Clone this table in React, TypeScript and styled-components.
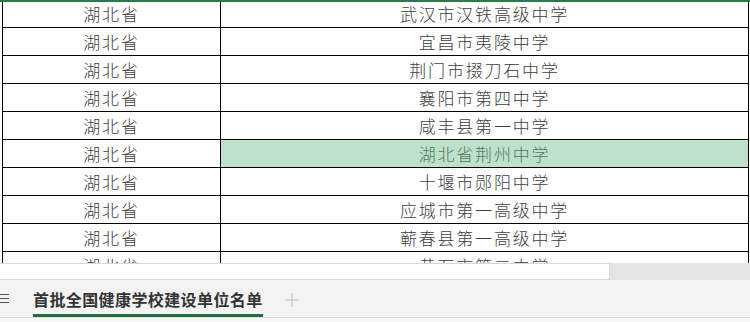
import React from 'react';
import styled, { createGlobalStyle } from 'styled-components';

const GlobalStyle = createGlobalStyle`
  html, body {
    margin: 0;
    padding: 0;
    background: #fff;
  }
  body {
    font-family: "Noto Sans CJK SC", "Noto Sans", sans-serif;
  }
`;

const StyledPage = styled.div`
  width: 750px;
  height: 322px;
  display: flex;
  flex-direction: column;
  overflow: hidden;
  background: #fff;
`;

const StyledSheet = styled.div`
  height: 261px;
  border-top: 2px solid #2a7a4c;
  overflow: hidden;
`;

const StyledRows = styled.div`
  margin-top: -2px;
`;

const StyledRow = styled.div`
  display: grid;
  grid-template-columns: 218px 529px;
  margin-left: 2px;
  height: 28px;
`;

const StyledCell = styled.div<{ $highlight?: boolean; $last?: boolean }>`
  display: flex;
  align-items: center;
  justify-content: center;
  border-left: 1px solid #000;
  border-bottom: 1px solid #000;
  border-right: ${(p) => (p.$last ? '1px solid #000' : 'none')};
  background: ${(p) => (p.$highlight ? '#bfe1cc' : '#fff')};
  color: ${(p) => (p.$highlight ? '#4f785d' : '#404040')};
  font-size: 17px;
  font-weight: 300;
  letter-spacing: 1.8px;
  line-height: 1;
  white-space: nowrap;
`;

const StyledScrollRow = styled.div`
  height: 17px;
  display: flex;
  background: #e4e4e4;
`;

const StyledThumb = styled.div`
  width: 609px;
  height: 15px;
  background: #fff;
  border: 1px solid #d6d6d6;
  border-left: none;
`;

const StyledTabBar = styled.div`
  height: 37px;
  display: flex;
  align-items: stretch;
  background: #f3f3f3;
  border-bottom: 1px solid #dcdcdc;
`;

const StyledMenu = styled.div`
  width: 33px;
  display: flex;
  align-items: center;
`;

const StyledTab = styled.div`
  display: flex;
  align-items: center;
  padding-top: 3px;
  border-bottom: 3px solid #236f45;
  font-size: 16px;
  font-weight: 700;
  letter-spacing: 0.4px;
  color: #333;
  white-space: nowrap;
`;

const StyledAdd = styled.div`
  display: flex;
  align-items: center;
  padding-left: 22px;
  padding-top: 3px;
`;

const StyledFooterGap = styled.div`
  flex: 1;
  background: #f7f7f7;
`;

const schools = [
  '武汉市汉铁高级中学',
  '宜昌市夷陵中学',
  '荆门市掇刀石中学',
  '襄阳市第四中学',
  '咸丰县第一中学',
  '湖北省荆州中学',
  '十堰市郧阳中学',
  '应城市第一高级中学',
  '蕲春县第一高级中学',
  '黄石市第二中学',
];

function App() {
  return (
    <StyledPage>
      <GlobalStyle />
      <StyledSheet>
        <StyledRows>
          {schools.map((name, i) => (
            <StyledRow key={name}>
              <StyledCell>湖北省</StyledCell>
              <StyledCell $last $highlight={i === 5}>{name}</StyledCell>
            </StyledRow>
          ))}
        </StyledRows>
      </StyledSheet>

      <StyledScrollRow>
        <StyledThumb />
      </StyledScrollRow>

      <StyledTabBar>
        <StyledMenu>
          <svg width="10" height="12" viewBox="0 0 10 12">
            <path d="M0 1.5h9M0 5.5h9M0 9.5h9" stroke="#555" strokeWidth="1.2" />
          </svg>
        </StyledMenu>
        <StyledTab>首批全国健康学校建设单位名单</StyledTab>
        <StyledAdd>
          <svg width="14" height="14" viewBox="0 0 14 14">
            <path d="M7 0v14M0 7h14" stroke="#bdbdbd" strokeWidth="1" />
          </svg>
        </StyledAdd>
      </StyledTabBar>
      <StyledFooterGap />
    </StyledPage>
  );
}

export default App;
